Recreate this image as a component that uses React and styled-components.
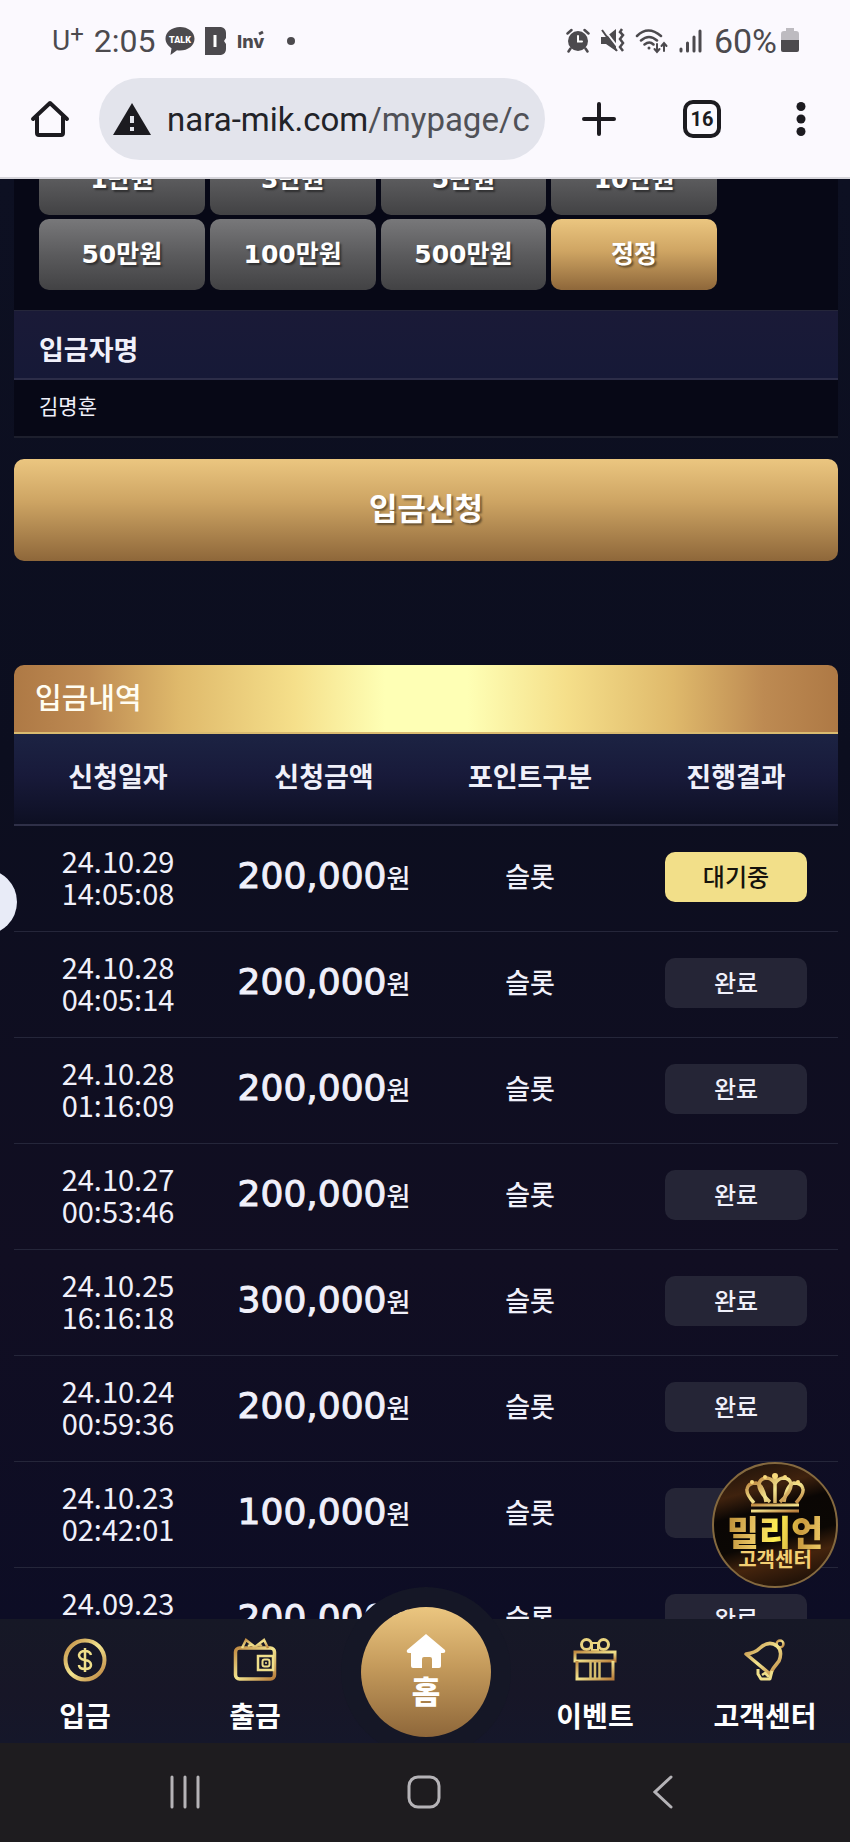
import React, { useLayoutEffect, useRef } from "react";
import styled, { createGlobalStyle } from "styled-components";

const GlobalStyle = createGlobalStyle`
  * {
    box-sizing: border-box;
  }

  body {
    margin: 0;
    background: #0c0e1f;
    color: #f0f0fa;
    font-family: "Noto Sans CJK KR", sans-serif;
  }

  button, input {
    font: inherit;
    color: inherit;
    border: 0;
    padding: 0;
    background: none;
  }

  a {
    color: inherit;
    text-decoration: none;
  }

  svg {
    display: block;
    flex-shrink: 0;
  }
`;

const Screen = styled.div`
  position: relative;
  display: flex;
  flex-direction: column;
  height: 100vh;
  overflow: hidden;
`;

// Status bar and browser toolbar
const TopArea = styled.header`
  flex-shrink: 0;
  background: #fbf9fe;
  border-bottom: 2px solid #d6d5db;
`;

const StatusBar = styled.div`
  display: flex;
  align-items: center;
  justify-content: space-between;
  height: 78px;
  padding: 3px 51px 0 52px;
  color: #4c4a4e;
  font-family: Roboto, sans-serif;
  font-size: 32px;
  line-height: 36px;
`;

const StatusGroup = styled.div`
  display: flex;
  align-items: center;
  gap: 10px;
`;

const Carrier = styled.span`
  font-size: 28px;

  sup {
    font-size: 24px;
    line-height: 0;
    vertical-align: 8px;
  }
`;

const BatteryText = styled.span`
  display: flex;
  align-items: center;
  gap: 4px;
  padding-left: 2px;
  font-size: 34px;
`;

const Toolbar = styled.div`
  display: flex;
  align-items: center;
  justify-content: space-between;
  height: 99px;
  padding: 0 36px 17px 30px;
  color: #1c1b20;
`;

const AddressBar = styled.button`
  display: flex;
  align-items: center;
  flex: 1;
  gap: 16px;
  height: 82px;
  margin: 0 37px 0 29px;
  padding: 0 14px;
  border-radius: 41px;
  background: #e3e4ec;
  color: #222328;
  font-family: Roboto, sans-serif;
  font-size: 33px;
  white-space: nowrap;
  overflow: hidden;
`;

const UrlPath = styled.span`
  color: #505157;
`;

const ToolButton = styled.button`
  display: grid;
  place-items: center;
  margin-left: ${(props) => props.$space || 0}px;
`;

const TabCount = styled.span`
  display: grid;
  place-items: center;
  width: 38px;
  height: 38px;
  border: 4px solid #1c1b20;
  border-radius: 10px;
  font-family: Roboto, sans-serif;
  font-size: 20px;
  font-weight: 700;
`;

// Page content
const Page = styled.main`
  flex: 1;
  min-height: 0;
  overflow-y: auto;
  scrollbar-width: none;
  padding: 0 12px 0 14px;
  background: linear-gradient(#0d1022, #0c0e1f 40%, #110e22 75%, #0d0d25);
`;

const FormPanel = styled.section`
  background: #070816;
  border-bottom: 2px solid #1d1f2d;
`;

const AmountGrid = styled.div`
  display: grid;
  grid-template-columns: repeat(4, 1fr);
  gap: 4px 5px;
  max-width: 728px;
  padding: 0 25px 20px;
`;

const AmountButton = styled.button`
  height: 71px;
  padding-bottom: 6px;
  border-radius: 10px;
  background: ${(props) =>
    props.$gold
      ? "linear-gradient(#ebc680, #cfa563 45%, #8e673a)"
      : "linear-gradient(#78787a, #5b5b5d 50%, #424244)"};
  color: #fff;
  font-family: "DejaVu Sans", "Noto Sans CJK KR", sans-serif;
  font-size: 25px;
  font-weight: 700;
  text-shadow: 2px 2px 2px rgba(0, 0, 0, 0.45);
`;

const FieldLabel = styled.label`
  display: flex;
  align-items: center;
  height: 70px;
  padding: 8px 25px 0;
  border-top: 1px solid #25263a;
  border-bottom: 2px solid #2c2d48;
  background: linear-gradient(#1a1a37, #161937);
  font-size: 27px;
  font-weight: 700;
`;

const FieldInput = styled.input`
  display: block;
  width: 100%;
  height: 56px;
  padding: 0 25px 6px;
  font-size: 21px;
`;

const SubmitButton = styled.button`
  display: block;
  width: 100%;
  height: 102px;
  margin: 21px 0 104px;
  padding-bottom: 8px;
  border-radius: 10px;
  background: linear-gradient(#ebc680, #cda463 42%, #8e673a);
  color: #fff;
  font-size: 31px;
  font-weight: 700;
  text-shadow: 2px 2px 2px rgba(0, 0, 0, 0.45);
`;

const HistoryTitle = styled.h2`
  height: 69px;
  margin: 0;
  padding: 0 21px;
  border-bottom: 2px solid #d9bb70;
  border-radius: 10px 10px 0 0;
  background: linear-gradient(
    90deg,
    #ae7945,
    #bd8a52 9%,
    #dfb96b 20%,
    #f5df8a 34%,
    #feffb5 45%,
    #feffb5 55%,
    #f5df8a 67%,
    #dfb96b 80%,
    #bd8a52 91%,
    #ae7945
  );
  color: #fffdf2;
  font-size: 29px;
  font-weight: 500;
  line-height: 62px;
`;

const HistoryTable = styled.table`
  width: 100%;
  table-layout: fixed;
  border-collapse: separate;
  border-spacing: 0;
  text-align: center;

  th {
    height: 92px;
    padding: 0 0 8px 2px;
    border-bottom: 2px solid #2f3048;
    font-size: 27px;
    font-weight: 700;
  }

  thead {
    background: linear-gradient(#1c2343, #181a3a 45%, #0d0f22);
  }

  td {
    height: 106px;
    padding: 0 0 6px 2px;
    border-bottom: 1px solid #25263a;
    font-size: 27px;
    font-weight: 500;
  }
`;

const DateText = styled.time`
  display: block;
  font-size: 29px;
  font-weight: 400;
  line-height: 32px;
`;

const Amount = styled.span`
  font-family: "DejaVu Sans", sans-serif;
  font-size: 36px;
  font-weight: 400;
  line-height: 48px;
  -webkit-text-stroke: 1px currentColor;
`;

const Won = styled.span`
  font-size: 26px;
  font-weight: 500;
`;

const StatusBadge = styled.span`
  display: block;
  width: 70%;
  height: 50px;
  margin: 2px auto 0;
  border-radius: 10px;
  background: ${(props) => (props.$waiting ? "#f2df89" : "#252536")};
  color: ${(props) => (props.$waiting ? "#15120c" : "#f0f0fa")};
  font-size: 24px;
  line-height: 47px;
`;

// Things floating over the page
const EdgeHandle = styled.button`
  position: absolute;
  top: 869px;
  left: -49px;
  width: 66px;
  height: 66px;
  border-radius: 50%;
  background: #e8ebf7;
`;

const SupportBadge = styled.a`
  position: absolute;
  right: 12px;
  bottom: 254px;
  z-index: 2;
  display: flex;
  flex-direction: column;
  align-items: center;
  width: 126px;
  height: 126px;
  padding-top: 9px;
  border: 2px solid #84693f;
  border-radius: 50%;
  background: linear-gradient(
    165deg,
    #18100a,
    #3f220e 24%,
    #0a0604 38%,
    #0b0704 60%,
    #44240d 74%,
    #0d0805
  );
`;

const BadgeName = styled.span`
  background: linear-gradient(100deg, #b98b35, #e9c463 30%, #fff04f 52%, #c99a3e 75%, #f0cd68);
  background-clip: text;
  color: transparent;
  font-size: 35px;
  font-weight: 900;
  line-height: 36px;
`;

const BadgeLabel = styled.span`
  color: #f3cf72;
  font-size: 20px;
  font-weight: 700;
  line-height: 20px;
`;

// Bottom menus
const BottomMenu = styled.nav`
  position: relative;
  z-index: 1;
  display: grid;
  grid-template-columns: repeat(5, 1fr);
  flex-shrink: 0;
  height: 124px;
  background: linear-gradient(#161826, #171627 60%, #15172a);
`;

const MenuLink = styled.a`
  display: flex;
  flex-direction: column;
  align-items: center;
  gap: 13px;
  padding-top: 19px;
  color: #fff;
  font-size: 28px;
  font-weight: 700;
  line-height: 40px;
`;

const HomeSlot = styled.div`
  position: relative;
`;

const HomeLink = styled.a`
  position: absolute;
  top: -12px;
  left: 50%;
  display: flex;
  flex-direction: column;
  align-items: center;
  width: 130px;
  height: 130px;
  margin-left: -64px;
  padding-top: 27px;
  border-radius: 50%;
  background: linear-gradient(#ebc680, #c59b5c 45%, #8e673a);
  box-shadow: 0 0 0 20px #151726;
  clip-path: inset(-20px -20px -6px);
  color: #fff;
  font-size: 31px;
  font-weight: 900;
  line-height: 44px;
`;

const SystemBar = styled.footer`
  display: grid;
  grid-template-columns: repeat(3, 1fr);
  place-items: center;
  flex-shrink: 0;
  height: 99px;
  padding: 0 68px 2px 66px;
  background: #1e1c1f;
`;

const quickAmounts = ["1만원", "3만원", "5만원", "10만원", "50만원", "100만원", "500만원", "정정"];

const deposits = [
  { date: "24.10.29", time: "14:05:08", amount: "200,000", waiting: true },
  { date: "24.10.28", time: "04:05:14", amount: "200,000" },
  { date: "24.10.28", time: "01:16:09", amount: "200,000" },
  { date: "24.10.27", time: "00:53:46", amount: "200,000" },
  { date: "24.10.25", time: "16:16:18", amount: "300,000" },
  { date: "24.10.24", time: "00:59:36", amount: "200,000" },
  { date: "24.10.23", time: "02:42:01", amount: "100,000" },
  { date: "24.09.23", time: "", amount: "200,000" },
];

const TalkIcon = () => (
  <svg width="30" height="28" viewBox="0 0 30 28">
    <path d="M15 0C7 0 .5 5 .5 11.500c0 4 2.500 7.500 6 9.700L5.500 28l6.500-4.700c1 .1 2 .2 3 .2 8 0 14.500-5 14.500-11.800S23 0 15 0z" fill="#4c4a4e" />
    <text x="15" y="15.500" textAnchor="middle" fontFamily="Roboto" fontWeight="900" fontSize="9" fill="#fff">TALK</text>
  </svg>
);

const BlockIcon = () => (
  <svg width="22" height="28" viewBox="0 0 22 28">
    <path d="M0 0h16q5 1 5 6v5l-2 3 2 3v5q0 5-5 6H0z" fill="#4c4a4e" />
    <path d="M10 8v12" stroke="#fff" strokeWidth="3" />
  </svg>
);

const InvIcon = () => (
  <svg width="30" height="24" viewBox="0 0 30 24">
    <text x="0" y="19" fontFamily="Inter" fontWeight="800" fontSize="18" fill="#4c4a4e">Inv</text>
    <path d="M22 5l4-2" stroke="#4c4a4e" strokeWidth="3" />
  </svg>
);

const AlarmIcon = () => (
  <svg width="24" height="25" viewBox="0 0 24 25" fill="none" stroke="#4c4a4e" strokeWidth="2.500" strokeLinecap="round">
    <circle cx="12" cy="13" r="10" fill="#4c4a4e" stroke="none" />
    <path d="M1.500 5.500l4-3.500M22.500 5.500l-4-3.500M4.500 20.500l-2 3M19.500 20.500l2 3" />
    <path d="M12 8v5.500h4" stroke="#fff" strokeWidth="2" />
  </svg>
);

const MuteIcon = () => (
  <svg width="25" height="25" viewBox="0 0 25 25">
    <path d="M1 9h5l10-8v22L6 16H1z" fill="#4c4a4e" />
    <path d="M3 0l17 22" stroke="#fbf9fe" strokeWidth="2" />
    <path d="M2 2l15 21" stroke="#4c4a4e" strokeWidth="2" />
    <path d="M22 1l-2 3 3 3-3 4 3 4-3 4 3 4" fill="none" stroke="#4c4a4e" strokeWidth="2.500" />
  </svg>
);

const WifiIcon = () => (
  <svg width="34" height="26" viewBox="0 0 34 26" fill="none" stroke="#4c4a4e" strokeWidth="2.500" strokeLinecap="round">
    <path d="M2 8q11-11 24 0M6 12.500q8-7 16 0M9.500 16.500q5-4 9 0" />
    <circle cx="14" cy="20" r="1.500" fill="#4c4a4e" stroke="none" />
    <path d="M22 16v7M19.500 21l2.500 3 2.500-3M29 23v-7M26.500 18l2.500-3 2.500 3" strokeWidth="2" />
  </svg>
);

const SignalIcon = () => (
  <svg width="23" height="24" viewBox="0 0 23 24" stroke="#4c4a4e" strokeWidth="3" strokeLinecap="round">
    <path d="M2 20v2M8.500 14v8M15 8v14M21 2v20" />
  </svg>
);

const BatteryIcon = () => (
  <svg width="18" height="25" viewBox="0 0 18 25">
    <path d="M5 0h8v3h2q3 0 3 3v6H0V6q0-3 3-3h2z" fill="#bdbbc0" />
    <path d="M0 12h18v10q0 2-2 2H2q-2 0-2-2z" fill="#4c4a4e" />
  </svg>
);

const HomeOutlineIcon = () => (
  <svg width="40" height="38" viewBox="0 0 40 38" fill="none" stroke="#1c1b20" strokeWidth="4" strokeLinecap="round" strokeLinejoin="round">
    <path d="M3 19L20 3l17 16" />
    <path d="M7 17v16q0 2 2 2h22q2 0 2-2V17" />
  </svg>
);

const WarningIcon = () => (
  <svg width="38" height="32" viewBox="0 0 38 32">
    <path d="M19 0l19 32H0z" fill="#1c1b20" />
    <path d="M19 13v7M19 24v4" stroke="#e3e4ec" strokeWidth="4" />
  </svg>
);

const GoldDefs = ({ id }) => (
  <defs>
    <linearGradient id={id} x1="0" y1="0" x2="1" y2="1">
      <stop offset="0" stopColor="#c08a42" />
      <stop offset="0.500" stopColor="#f3e58f" />
      <stop offset="1" stopColor="#b87c3a" />
    </linearGradient>
  </defs>
);

const CoinIcon = () => (
  <svg width="44" height="44" viewBox="0 0 44 44" fill="none">
    <GoldDefs id="coin" />
    <circle cx="22" cy="22" r="19.500" stroke="url(#coin)" strokeWidth="4" />
    <path d="M28 17q-1-4-6-4t-6 4q0 4 6 5t6 5q0 4-6 4t-6-4M22 10v24" stroke="#efdf8b" strokeWidth="2.500" />
  </svg>
);

const WalletIcon = () => (
  <svg width="44" height="44" viewBox="0 0 44 44" fill="none" stroke="url(#wallet)" strokeWidth="3.500">
    <GoldDefs id="wallet" />
    <rect x="2.500" y="10" width="39" height="31" rx="4" />
    <path d="M9 10l4-8 9 7 9-7 4 8M15 8l4-2M29 8l-4-2" strokeWidth="2.500" />
    <g stroke="#efdf8b">
      <rect x="25" y="18" width="15" height="14" strokeWidth="2.500" />
      <rect x="29.500" y="21.500" width="7" height="7" rx="2" strokeWidth="2" />
    </g>
    <circle cx="33" cy="25" r="1" fill="#f3e58f" stroke="none" />
  </svg>
);

const GiftIcon = () => (
  <svg width="44" height="44" viewBox="0 0 44 44" fill="none" stroke="url(#gift)" strokeWidth="3">
    <GoldDefs id="gift" />
    <g stroke="#e9d480">
      <circle cx="13.500" cy="6.500" r="5" strokeWidth="3" />
      <circle cx="30.500" cy="6.500" r="5" strokeWidth="3" />
      <rect x="19" y="5" width="6" height="7" strokeWidth="2" />
    </g>
    <rect x="2" y="14" width="40" height="9" />
    <path d="M4 23v18h36V23" />
    <path d="M17.500 24v17M26.500 24v17M22 24v17" stroke="#d5bd6c" strokeWidth="2.500" />
  </svg>
);

const BellIcon = () => (
  <svg width="44" height="44" viewBox="0 0 44 44" fill="none" stroke="url(#bell)" strokeWidth="3.500" strokeLinejoin="round">
    <GoldDefs id="bell" />
    <circle cx="37" cy="6" r="3.500" strokeWidth="2.500" />
    <path d="M3 16q9-1 14-6 9-8 17-2 6 5 2 15-6 7-9 13L3 16z" />
    <path d="M15 31v5l3 5h9l2-8" stroke="#efdf8b" strokeWidth="3" />
    <path d="M19 37l3-2 4 4" stroke="#efdf8b" strokeWidth="2.500" />
  </svg>
);

const HouseIcon = () => (
  <svg width="40" height="34" viewBox="0 0 40 34">
    <path d="M20 0L39 16q1 3-2 3h-2v13q0 2-2 2h-7v-9q0-2-2-2h-6q-2 0-2 2v9H7q-2 0-2-2V19H3q-3 0-2-3z" fill="#fff" />
  </svg>
);

const CrownIcon = () => (
  <svg width="60" height="40" viewBox="0 0 60 40" fill="none" stroke="url(#crown)" strokeWidth="3.500">
    <GoldDefs id="crown" />
    <path d="M9 30Q1 21 2 16q1-6 9-6 7 1 10 19M51 30q8-9 7-14-1-6-9-6-7 1-10 19" />
    <path d="M25 29Q13 18 14 11q1-6 8-6 6 1 8 6 2-5 8-6 7 0 8 6 1 7-11 18M30 3v27" />
    <path d="M6 32h48M6 38h48" strokeWidth="3" />
    <path d="M9 35h42" strokeDasharray="2 2" strokeWidth="2" />
    <g fill="#f8da7c" stroke="none">
      <circle cx="30" cy="3" r="3" />
      <circle cx="20" cy="4" r="2" />
      <circle cx="40" cy="4" r="2" />
      <circle cx="7" cy="9" r="2" />
      <circle cx="53" cy="9" r="2" />
    </g>
  </svg>
);

const DepositRow = ({ date, time, amount, waiting }) => (
  <tr>
    <td>
      <DateText>{date}</DateText>
      <DateText>{time || "\u00a0"}</DateText>
    </td>
    <td>
      <Amount>{amount}</Amount>
      <Won>원</Won>
    </td>
    <td>슬롯</td>
    <td>
      <StatusBadge $waiting={waiting}>{waiting ? "대기중" : "완료"}</StatusBadge>
    </td>
  </tr>
);

const App = () => {
  const pageRef = useRef(null);

  useLayoutEffect(() => {
    pageRef.current.scrollTop = 35;
  }, []);

  return (
    <Screen>
      <GlobalStyle />
      <TopArea>
        <StatusBar>
          <StatusGroup>
            <Carrier>
              U<sup>+</sup>
            </Carrier>
            <span>2:05</span>
            <TalkIcon />
            <BlockIcon />
            <InvIcon />
            <svg width="30" height="8" viewBox="0 0 30 8">
              <circle cx="14" cy="4" r="4" fill="#4c4a4e" />
            </svg>
          </StatusGroup>
          <StatusGroup>
            <AlarmIcon />
            <MuteIcon />
            <WifiIcon />
            <SignalIcon />
            <BatteryText>
              60%
              <BatteryIcon />
            </BatteryText>
          </StatusGroup>
        </StatusBar>
        <Toolbar>
          <ToolButton aria-label="홈 화면">
            <HomeOutlineIcon />
          </ToolButton>
          <AddressBar>
            <WarningIcon />
            <span>
              nara-mik.com<UrlPath>/mypage/c</UrlPath>
            </span>
          </AddressBar>
          <ToolButton aria-label="새 탭">
            <svg width="34" height="34" viewBox="0 0 34 34" stroke="#1c1b20" strokeWidth="4" strokeLinecap="round">
              <path d="M17 2v30M2 17h30" />
            </svg>
          </ToolButton>
          <ToolButton $space={67}>
            <TabCount>16</TabCount>
          </ToolButton>
          <ToolButton $space={67} aria-label="메뉴">
            <svg width="26" height="34" viewBox="0 0 26 34" fill="#1c1b20">
              <circle cx="13" cy="4.500" r="4.500" />
              <circle cx="13" cy="17" r="4.500" />
              <circle cx="13" cy="29.500" r="4.500" />
            </svg>
          </ToolButton>
        </Toolbar>
      </TopArea>

      <Page ref={pageRef}>
        <FormPanel>
          <AmountGrid>
            {quickAmounts.map((label) => (
              <AmountButton key={label} $gold={label === "정정"}>
                {label}
              </AmountButton>
            ))}
          </AmountGrid>
          <FieldLabel htmlFor="depositor">입금자명</FieldLabel>
          <FieldInput id="depositor" defaultValue="김명훈" />
        </FormPanel>
        <SubmitButton>입금신청</SubmitButton>

        <HistoryTitle>입금내역</HistoryTitle>
        <HistoryTable>
          <thead>
            <tr>
              <th>신청일자</th>
              <th>신청금액</th>
              <th>포인트구분</th>
              <th>진행결과</th>
            </tr>
          </thead>
          <tbody>
            {deposits.map((item) => (
              <DepositRow key={item.date + item.time} {...item} />
            ))}
          </tbody>
        </HistoryTable>
      </Page>

      <EdgeHandle aria-label="패널 열기" />
      <SupportBadge href="#support">
        <CrownIcon />
        <BadgeName>밀리언</BadgeName>
        <BadgeLabel>고객센터</BadgeLabel>
      </SupportBadge>

      <BottomMenu>
        <MenuLink href="#deposit">
          <CoinIcon />
          입금
        </MenuLink>
        <MenuLink href="#withdraw">
          <WalletIcon />
          출금
        </MenuLink>
        <HomeSlot>
          <HomeLink href="#home">
            <HouseIcon />
            홈
          </HomeLink>
        </HomeSlot>
        <MenuLink href="#event">
          <GiftIcon />
          이벤트
        </MenuLink>
        <MenuLink href="#support">
          <BellIcon />
          고객센터
        </MenuLink>
      </BottomMenu>

      <SystemBar>
        <ToolButton aria-label="최근 앱">
          <svg width="32" height="34" viewBox="0 0 32 34" stroke="#b5b3b7" strokeWidth="3" strokeLinecap="round">
            <path d="M3 2v30M16 2v30M29 2v30" />
          </svg>
        </ToolButton>
        <ToolButton aria-label="홈">
          <svg width="34" height="34" viewBox="0 0 34 34" fill="none" stroke="#b5b3b7" strokeWidth="3">
            <rect x="2" y="2" width="30" height="30" rx="9" />
          </svg>
        </ToolButton>
        <ToolButton aria-label="뒤로">
          <svg width="20" height="34" viewBox="0 0 20 34" fill="none" stroke="#b5b3b7" strokeWidth="3" strokeLinecap="round">
            <path d="M18 2L2 17l16 15" />
          </svg>
        </ToolButton>
      </SystemBar>
    </Screen>
  );
};

export default App;
